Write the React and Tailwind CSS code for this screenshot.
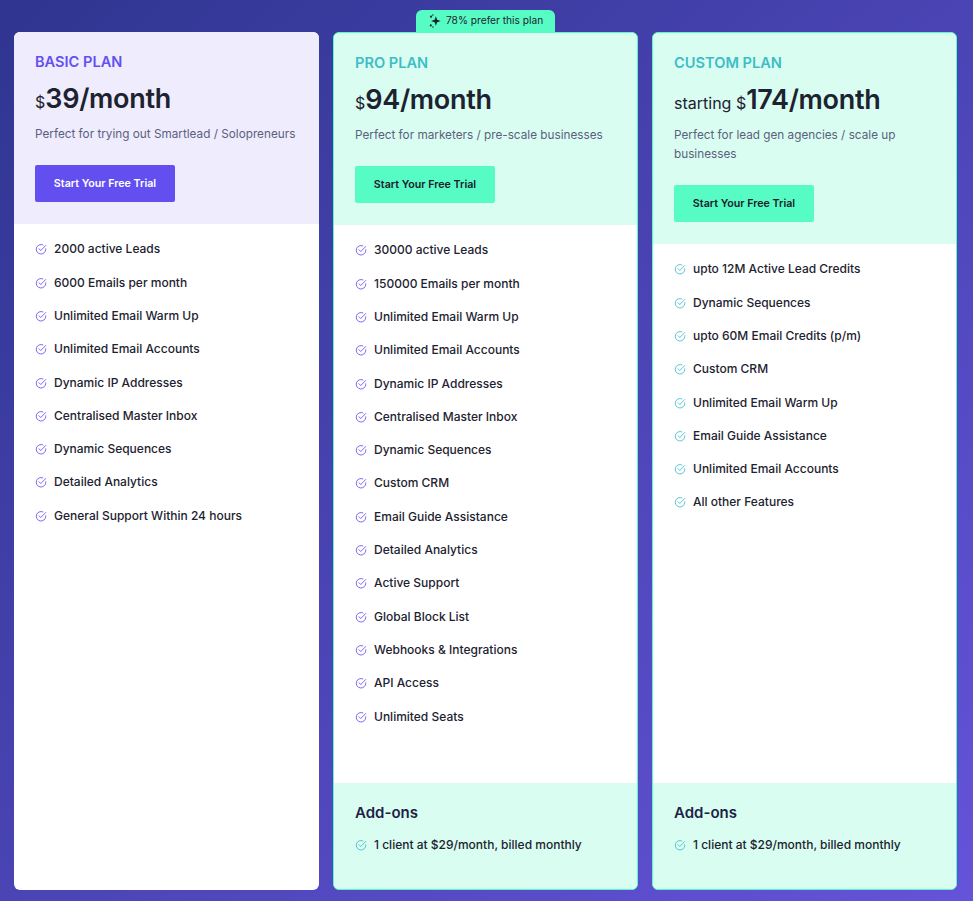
const basicFeatures = [
  "2000 active Leads",
  "6000 Emails per month",
  "Unlimited Email Warm Up",
  "Unlimited Email Accounts",
  "Dynamic IP Addresses",
  "Centralised Master Inbox",
  "Dynamic Sequences",
  "Detailed Analytics",
  "General Support Within 24 hours",
];

const proFeatures = [
  "30000 active Leads",
  "150000 Emails per month",
  "Unlimited Email Warm Up",
  "Unlimited Email Accounts",
  "Dynamic IP Addresses",
  "Centralised Master Inbox",
  "Dynamic Sequences",
  "Custom CRM",
  "Email Guide Assistance",
  "Detailed Analytics",
  "Active Support",
  "Global Block List",
  "Webhooks & Integrations",
  "API Access",
  "Unlimited Seats",
];

const customFeatures = [
  "upto 12M Active Lead Credits",
  "Dynamic Sequences",
  "upto 60M Email Credits (p/m)",
  "Custom CRM",
  "Unlimited Email Warm Up",
  "Email Guide Assistance",
  "Unlimited Email Accounts",
  "All other Features",
];

function CheckIcon({ className }) {
  return (
    <svg viewBox="0 0 24 24" fill="none" stroke="currentColor" strokeWidth="1.7" strokeLinecap="round" strokeLinejoin="round" className={className}>
      <path d="M21.5 11.5v1a9.5 9.5 0 1 1-5.6-8.7" />
      <path d="M8 11.5l3.5 3.5L21.5 5" />
    </svg>
  );
}

function Sparkle() {
  return (
    <svg viewBox="0 0 16 16" fill="#17202c" className="w-[14px] h-[14px] shrink-0">
      <path d="M9 2.5l1.4 4.1L14.5 8l-4.1 1.4L9 13.5 7.6 9.4 3.5 8l4.1-1.4z" />
      <circle cx="3.5" cy="3" r="1.2" />
      <circle cx="5.6" cy="1.2" r="0.8" />
      <circle cx="3.2" cy="13" r="1.2" />
      <circle cx="5.6" cy="14.8" r="0.8" />
    </svg>
  );
}

function FeatureRow({ text, iconColor }) {
  return (
    <li className="flex items-center gap-[7px] h-[20px] text-[12px] font-medium text-[#1d2230]">
      <CheckIcon className={`w-[12px] h-[12px] shrink-0 ${iconColor}`} />
      <span>{text}</span>
    </li>
  );
}

function PlanCard({ name, prefix, price, description, features, featured, addons, iconColor }) {
  return (
    <div
      className={
        featured
          ? "relative flex flex-col w-[305px] rounded-[6px] border border-[#57fcc5] bg-white"
          : "relative flex flex-col w-[305px] rounded-[6px] bg-white"
      }
    >
      <div className={featured ? "px-[21px] pt-[20px] pb-[22px] rounded-t-[6px] bg-[#d9fdf1]" : "px-[21px] pt-[20px] pb-[22px] rounded-t-[6px] bg-[#eeecfd]"}>
        <h3 className={featured ? "text-[14.6px] leading-[20px] font-semibold text-[#3dbdc7]" : "text-[14.6px] leading-[20px] font-semibold text-[#6450f0]"}>
          {name}
        </h3>
        <p className="mt-[9px] leading-[36px] text-[#1d2230]">
          <span className="text-[16px]">{prefix}</span>
          <span className="text-[27px] font-semibold tracking-[-0.3px]">{price}/month</span>
        </p>
        <p className="mt-[5px] text-[11.75px] leading-[19px] text-[#5c5f7e]">{description}</p>
        <button
          className={
            featured
              ? "mt-[21px] block w-[140px] h-[37px] pt-px rounded-[2px] bg-[#57fcc5] text-[10.7px] font-semibold text-[#17202c]"
              : "mt-[21px] block w-[140px] h-[37px] pt-px rounded-[2px] bg-[#634ff0] text-[10.7px] font-semibold text-white"
          }
        >
          Start Your Free Trial
        </button>
      </div>

      <ul className="flex-1 flex flex-col gap-[13.3px] px-[21px] pt-[15.4px]">
        {features.map((f) => (
          <FeatureRow key={f} text={f} iconColor={iconColor} />
        ))}
      </ul>

      {addons && (
        <div className="h-[106px] px-[21px] pt-[20px] rounded-b-[6px] bg-[#d9fdf1]">
          <h4 className="text-[15px] leading-[20px] font-semibold text-[#221f45]">Add-ons</h4>
          <ul className="mt-[12px]">
            <FeatureRow text="1 client at $29/month, billed monthly" iconColor="text-[#3dbdc7]" />
          </ul>
        </div>
      )}

      {featured && name === "PRO PLAN" && (
        <div className="absolute left-[82px] top-[-23px] flex items-center gap-[4px] w-[139px] h-[22px] pl-[12px] rounded-t-[6px] bg-[#57fcc5] text-[10.2px] text-[#1d2230]">
          <Sparkle />
          78% prefer this plan
        </div>
      )}
    </div>
  );
}

export default function App() {
  return (
    <div className="flex gap-[14px] h-[901px] pl-[14px] pr-[16px] pt-[32px] pb-[11px] bg-gradient-to-br from-[#2f3590] to-[#6553d9] font-['Inter',sans-serif]">
      <PlanCard
        name="BASIC PLAN"
        prefix="$"
        price="39"
        description="Perfect for trying out Smartlead / Solopreneurs"
        features={basicFeatures}
        iconColor="text-[#6450f0]"
      />
      <PlanCard
        name="PRO PLAN"
        prefix="$"
        price="94"
        description="Perfect for marketers / pre-scale businesses"
        features={proFeatures}
        featured
        addons
        iconColor="text-[#6450f0]"
      />
      <PlanCard
        name="CUSTOM PLAN"
        prefix="starting $"
        price="174"
        description="Perfect for lead gen agencies / scale up businesses"
        features={customFeatures}
        featured
        addons
        iconColor="text-[#3dbdc7]"
      />
    </div>
  );
}
